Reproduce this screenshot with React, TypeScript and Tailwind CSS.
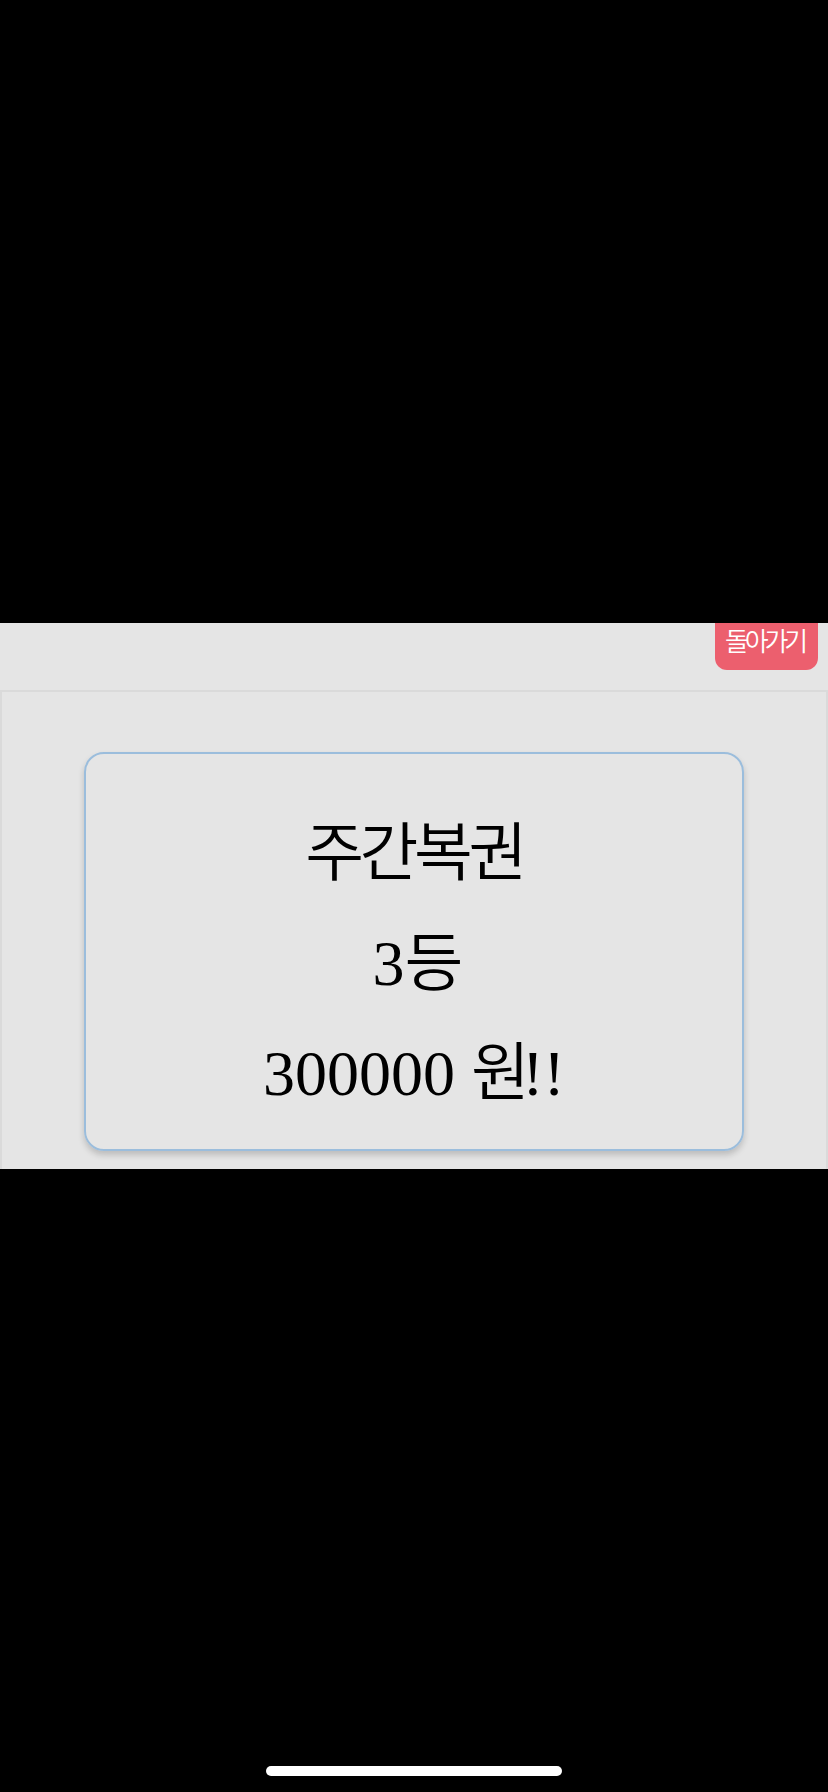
import React from 'react';

const ko = "font-['Noto_Sans_CJK_KR',sans-serif] font-[350] tracking-[-0.12em]";

export default function App() {
    return (
        <main className="w-[828px] h-[1792px] bg-black flex flex-col font-['Liberation_Serif','Noto_Sans_CJK_KR',serif]">
            <div className="h-[623px] shrink-0" />

            <header className="h-[67px] bg-[#e5e5e5] flex justify-end pr-[10px]">
                <button className="h-[47px] w-[103px] bg-[#ec5f6e] rounded-b-[12px] flex justify-center pt-[2px] pr-[4px] text-white text-[26px] leading-[30px] font-['Noto_Sans_CJK_KR',sans-serif] font-[350] tracking-[-0.16em]">
                    돌아가기
                </button>
            </header>

            <section className="h-[479px] bg-[#e5e5e5] border-x-2 border-t-2 border-[#dadada] px-[82px] pt-[60px]">
                <div className="h-[399px] rounded-[20px] border-2 border-[#9bbddc] shadow-[0_4px_6px_rgba(0,0,0,0.18)] flex flex-col items-center pt-[38px] text-black text-[64px]">
                    <p className="h-[110px] leading-[110px]">
                        <span className="font-['Noto_Sans_CJK_KR',sans-serif] font-[350] tracking-[-0.07em]">주간복권</span>
                    </p>
                    <p className="h-[110px] leading-[110px]">
                        3<span className={ko}>등</span>
                    </p>
                    <p className="h-[110px] leading-[110px]">
                        300000 <span className={ko}>원</span>!!
                    </p>
                </div>
            </section>

            <div className="flex-1 flex items-end justify-center pb-[16px]">
                <div className="w-[296px] h-[10px] rounded-full bg-white" />
            </div>
        </main>
    );
}
